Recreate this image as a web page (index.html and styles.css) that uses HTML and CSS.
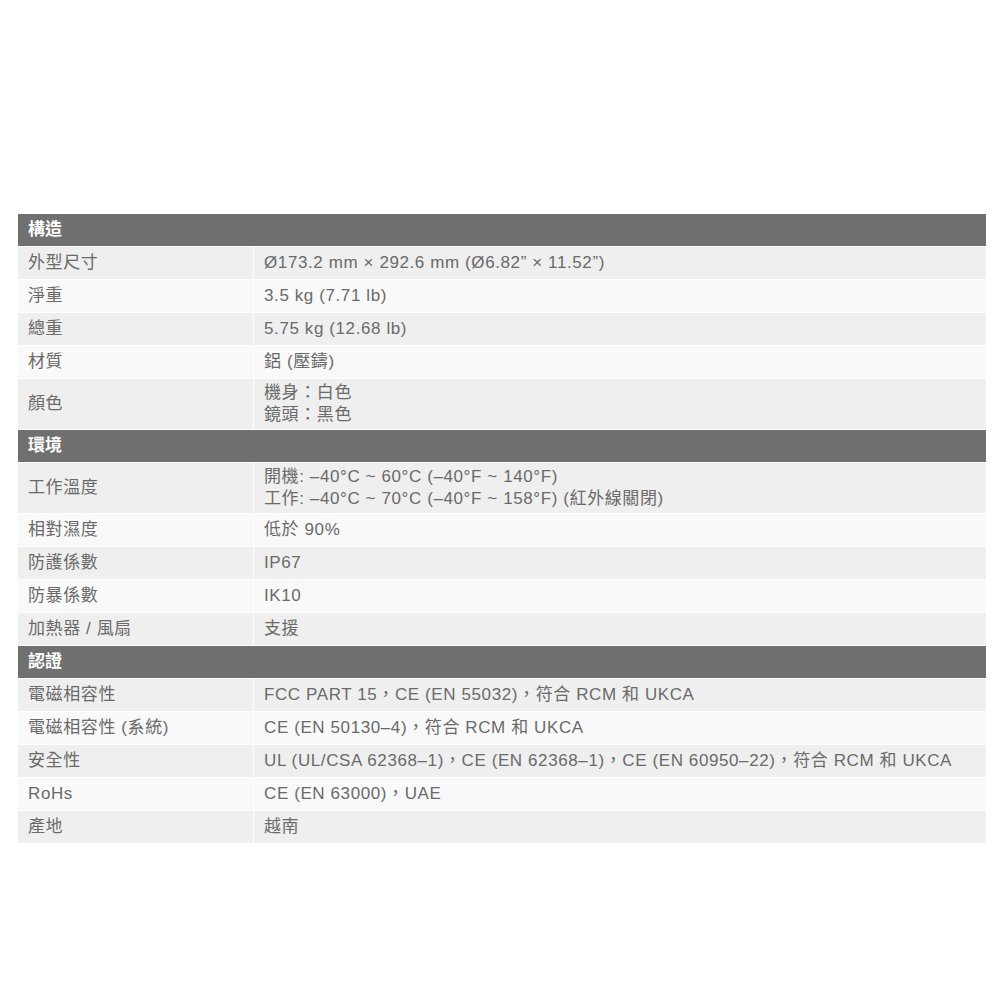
FILE: index.html
```html
<!DOCTYPE html>
<html lang="zh-Hant">
<head>
<meta charset="utf-8">
<link rel="stylesheet" href="styles.css">
</head>
<body>
<table class="spec">
  <colgroup><col class="col-k"><col class="col-v"></colgroup>
  <tr class="sec"><th colspan="2">構造</th></tr>
  <tr class="odd"><td>外型尺寸</td><td>Ø173.2 mm × 292.6 mm (Ø6.82” × 11.52”)</td></tr>
  <tr class="even"><td>淨重</td><td>3.5 kg (7.71 lb)</td></tr>
  <tr class="odd"><td>總重</td><td>5.75 kg (12.68 lb)</td></tr>
  <tr class="even"><td>材質</td><td>鋁 (壓鑄)</td></tr>
  <tr class="odd tall"><td>顏色</td><td>機身：白色<br>鏡頭：黑色</td></tr>
  <tr class="sec"><th colspan="2">環境</th></tr>
  <tr class="odd tall"><td>工作溫度</td><td>開機: –40°C ~ 60°C (–40°F ~ 140°F)<br>工作: –40°C ~ 70°C (–40°F ~ 158°F) (紅外線關閉)</td></tr>
  <tr class="even"><td>相對濕度</td><td>低於 90%</td></tr>
  <tr class="odd"><td>防護係數</td><td>IP67</td></tr>
  <tr class="even"><td>防暴係數</td><td>IK10</td></tr>
  <tr class="odd"><td>加熱器 / 風扇</td><td>支援</td></tr>
  <tr class="sec"><th colspan="2">認證</th></tr>
  <tr class="odd"><td>電磁相容性</td><td>FCC PART 15，CE (EN 55032)，符合 RCM 和 UKCA</td></tr>
  <tr class="even"><td>電磁相容性 (系統)</td><td>CE (EN 50130–4)，符合 RCM 和 UKCA</td></tr>
  <tr class="odd"><td>安全性</td><td>UL (UL/CSA 62368–1)，CE (EN 62368–1)，CE (EN 60950–22)，符合 RCM 和 UKCA</td></tr>
  <tr class="even"><td>RoHs</td><td>CE (EN 63000)，UAE</td></tr>
  <tr class="odd"><td>產地</td><td>越南</td></tr>
</table>
</body>
</html>
```

FILE: styles.css
```css
html, body {
  margin: 0;
  padding: 0;
  background: #ffffff;
}

body {
  padding-top: 213px;
  padding-left: 17px;
  font-family: "Liberation Sans", "Noto Sans CJK TC", sans-serif;
  font-size: 17px;
  color: #6a6a6a;
}

.spec {
  width: 970px;
  border-collapse: collapse;
  table-layout: fixed;
}

.col-k {
  width: 236px;
}

.spec th,
.spec td {
  border: 1px solid #ffffff;
  padding: 3px 10px;
  line-height: 22px;
  height: 26px;
  text-align: left;
  vertical-align: middle;
  letter-spacing: 0.6px;
  white-space: nowrap;
}

.sec th {
  background: #707070;
  color: #ffffff;
  font-weight: bold;
  letter-spacing: 0;
}

.odd td {
  background: #efefef;
}

.even td {
  background: #f9f9f9;
}

.tall td {
  height: 44px;
}
```
